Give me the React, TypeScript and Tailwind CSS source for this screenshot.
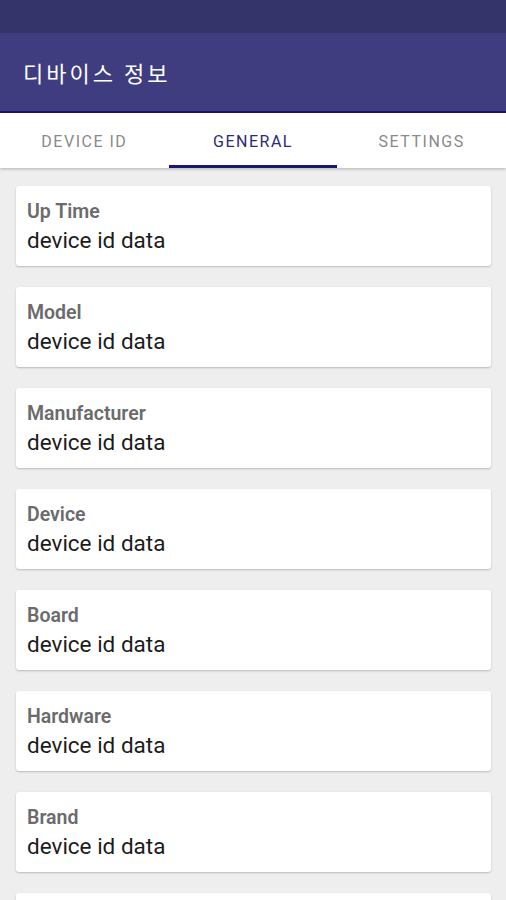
import React from "react";

const FIELDS = [
  "Up Time",
  "Model",
  "Manufacturer",
  "Device",
  "Board",
  "Hardware",
  "Brand",
];

const TABS = ["DEVICE ID", "GENERAL", "SETTINGS"];

const InfoCard: React.FC<{ label?: string }> = ({ label }) => (
  <div className="bg-white rounded-[3px] shadow-[0_1px_2px_rgba(0,0,0,0.22)] h-[80px] px-[11px] pt-[14px] flex-shrink-0">
    {label && (
      <>
        <div className="text-[19.5px] leading-[24px] font-semibold text-[#6b6b6b]">{label}</div>
        <div className="text-[22.5px] leading-[28px] text-[#1c1c1c] mt-[2px]">device id data</div>
      </>
    )}
  </div>
);

export default function App() {
  const active = 1;
  return (
    <div
      className="w-[506px] h-[900px] overflow-hidden flex flex-col bg-[#eeeeee]"
      style={{ fontFamily: "Roboto, 'Noto Sans CJK KR', sans-serif" }}
    >
      <div className="h-[33px] bg-[#35346a] flex-shrink-0" />
      <div className="h-[78px] bg-[#3f3d80] flex items-center px-[23px] flex-shrink-0">
        <span className="text-white text-[22px] tracking-[3px]" style={{ fontFamily: "'Noto Sans CJK KR', sans-serif" }}>
          디바이스 정보
        </span>
      </div>
      <div className="h-[2px] bg-[#1c1670] flex-shrink-0" />
      <div className="h-[55px] bg-white flex shadow-[0_1px_3px_rgba(0,0,0,0.25)] flex-shrink-0 relative z-10">
        {TABS.map((t, i) => (
          <div key={t} className="flex-1 flex flex-col">
            <div
              className={`flex-1 flex items-center justify-center pt-[6px] text-[16px] tracking-[1.5px] ${
                i === active ? "text-[#2d2a78]" : "text-[#8a8a8a]"
              }`}
            >
              {t}
            </div>
            <div className={`h-[3px] ${i === active ? "bg-[#1c1670]" : "bg-transparent"}`} />
          </div>
        ))}
      </div>
      <div className="flex flex-col gap-[21px] px-[16px] pt-[18px] pr-[15px]">
        {FIELDS.map((f) => (
          <InfoCard key={f} label={f} />
        ))}
        <InfoCard />
      </div>
    </div>
  );
}
